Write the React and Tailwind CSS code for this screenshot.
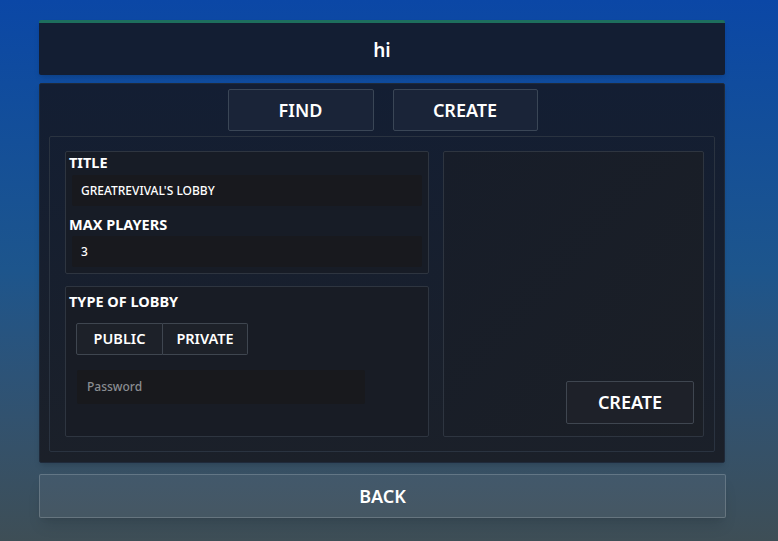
export default function App() {
  return (
    <div className="w-[778px] h-[541px] bg-gradient-to-b from-[#0b47a6] via-[#1d558c] to-[#3e4e56] flex flex-col items-start pl-[39px] pt-[20px] text-white [font-family:'Noto_Sans','Open_Sans',sans-serif]">
      {/* Header */}
      <div className="w-[686px] h-[55px] bg-[#131e33] border-t-[3px] border-[#1d6e5e] rounded-[2px] shadow-md flex items-center justify-center pt-[3px]">
        <span className="text-[19px] font-semibold">hi</span>
      </div>

      {/* Main panel */}
      <div className="mt-[8px] w-[686px] h-[380px] bg-gradient-to-b from-[#131e33] to-[#1b2029] border border-[#1f2a3a] rounded-[2px] shadow-md flex flex-col px-[9px] pt-[5px] pb-[10px]">
        <div className="flex justify-center gap-[19px] pl-[1px]">
          <button className="w-[146px] h-[42px] bg-[#1a2438] border border-[#3a4656] rounded-[2px] text-[18px] font-semibold">
            FIND
          </button>
          <button className="w-[145px] h-[42px] bg-[#1a2438] border border-[#3a4656] rounded-[2px] text-[18px] font-semibold">
            CREATE
          </button>
        </div>

        <div className="mt-[5px] flex-1 border border-[#2a3340] rounded-[2px] flex gap-[14px] pl-[15px] pr-[10px] pt-[14px] pb-[14px]">
          {/* Left column */}
          <div className="w-[364px] flex flex-col gap-[12px]">
            <div className="h-[123px] bg-[#171c26] border border-[#2e3540] rounded-[2px] px-[3px] pt-[1px]">
              <div className="text-[14.5px] font-bold leading-[18px]">TITLE</div>
              <div className="mt-[4px] mx-[3px] h-[31px] bg-[#18191e] rounded-[2px] flex items-center pl-[9px] text-[12px] font-medium">
                GREATREVIVAL'S LOBBY
              </div>
              <div className="mt-[9px] text-[14.5px] font-bold leading-[18px]">MAX PLAYERS</div>
              <div className="mt-[3px] mx-[3px] h-[31px] bg-[#18191e] rounded-[2px] flex items-center pl-[9px] text-[12px] font-medium">
                3
              </div>
            </div>
            <div className="flex-1 bg-[#181c25] border border-[#2e3540] rounded-[2px] px-[3px] pt-[5px]">
              <div className="text-[14.5px] font-bold leading-[18px]">TYPE OF LOBBY</div>
              <div className="mt-[13px] ml-[7px] flex">
                <button className="w-[87px] h-[32px] bg-[#1d2129] border border-[#3f4650] rounded-l-[2px] text-[14.5px] font-semibold">
                  PUBLIC
                </button>
                <button className="w-[85px] h-[32px] bg-[#1d2129] border border-l-0 border-[#3f4650] rounded-r-[2px] text-[14.5px] font-semibold">
                  PRIVATE
                </button>
              </div>
              <div className="mt-[15px] ml-[8px] w-[288px] h-[34px] bg-[#18191d] rounded-[2px] flex items-center pl-[10px] text-[12px] text-[#8a8d92] font-medium">
                Password
              </div>
            </div>
          </div>

          {/* Right box */}
          <div className="flex-1 bg-gradient-to-br from-[#171d29] to-[#1b1f26] border border-[#2e3540] rounded-[2px] flex items-end justify-end pr-[9px] pb-[12px]">
            <button className="w-[128px] h-[43px] bg-[#1e2129] border border-[#3f4650] rounded-[2px] text-[18px] font-semibold">
              CREATE
            </button>
          </div>
        </div>
      </div>

      {/* Back */}
      <button className="mt-[11px] w-[687px] h-[44px] bg-white/[0.05] border border-white/[0.18] rounded-[2px] shadow-lg text-[18px] font-semibold">
        BACK
      </button>
    </div>
  );
}
